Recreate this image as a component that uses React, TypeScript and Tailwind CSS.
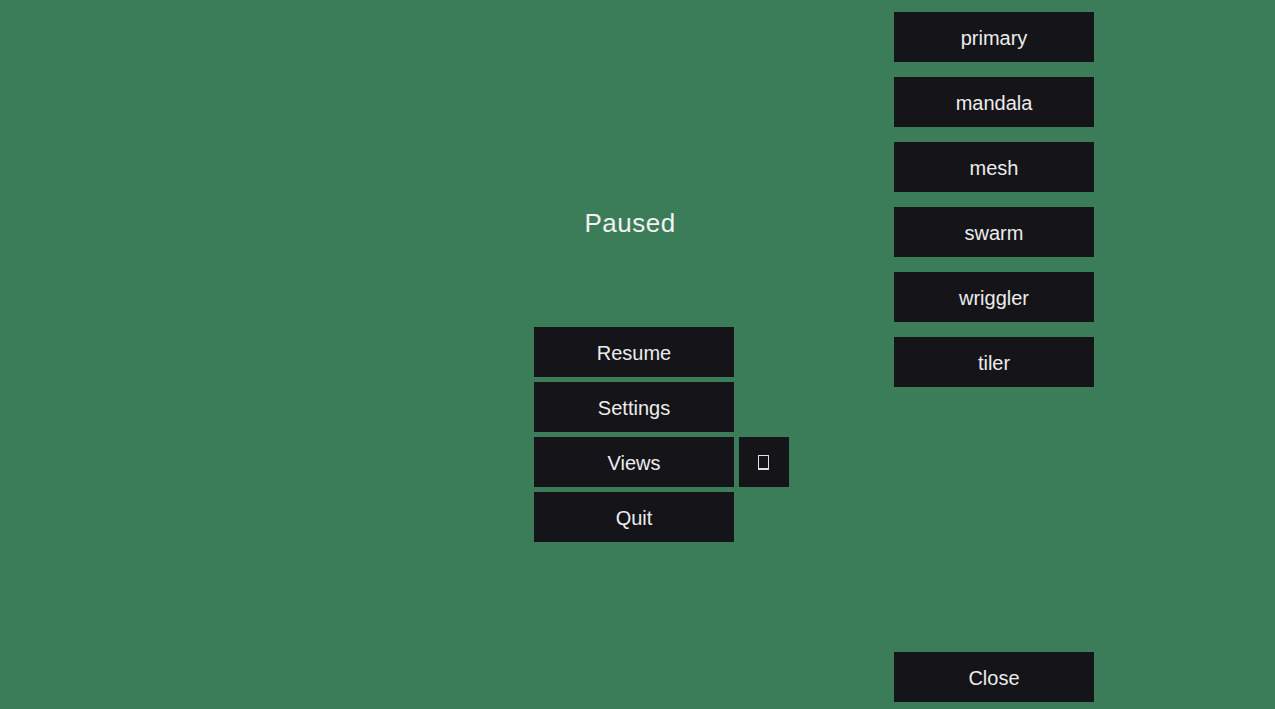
import React from 'react';

const btn =
  "flex h-[50px] w-[200px] items-center justify-center bg-[#151418] pt-[2px] text-[20px] text-[#ececec]";

const views = ['primary', 'mandala', 'mesh', 'swarm', 'wriggler', 'tiler'];

export default function App() {
  return (
    <div
      className="flex h-[709px] w-[1275px] overflow-hidden bg-[#3b7c59]"
      style={{ fontFamily: '"Liberation Sans", Arial, sans-serif' }}
    >
      <div className="ml-[534px] flex flex-col pt-[207px]">
        <div className="w-[192px] text-center text-[26px] font-light leading-[32px] tracking-[0.5px] text-[#f2f2f2]">
          Paused
        </div>
        <div className="mt-[88px] flex flex-col gap-[5px]">
          <button className={btn}>Resume</button>
          <button className={btn}>Settings</button>
          <div className="flex gap-[5px]">
            <button className={btn}>Views</button>
            <button className="flex h-[50px] w-[50px] items-center justify-center bg-[#151418] pr-[2px] pt-[1px]">
              <span className="block h-[15px] w-[11px] border border-b-2 border-[#e0e0e0]" />
            </button>
          </div>
          <button className={btn}>Quit</button>
        </div>
      </div>
      <div className="ml-[105px] flex flex-col justify-between pb-[7px] pt-[12px]">
        <div className="flex flex-col gap-[15px]">
          {views.map((v) => (
            <button key={v} className={btn}>
              {v}
            </button>
          ))}
        </div>
        <button className={btn}>Close</button>
      </div>
    </div>
  );
}
